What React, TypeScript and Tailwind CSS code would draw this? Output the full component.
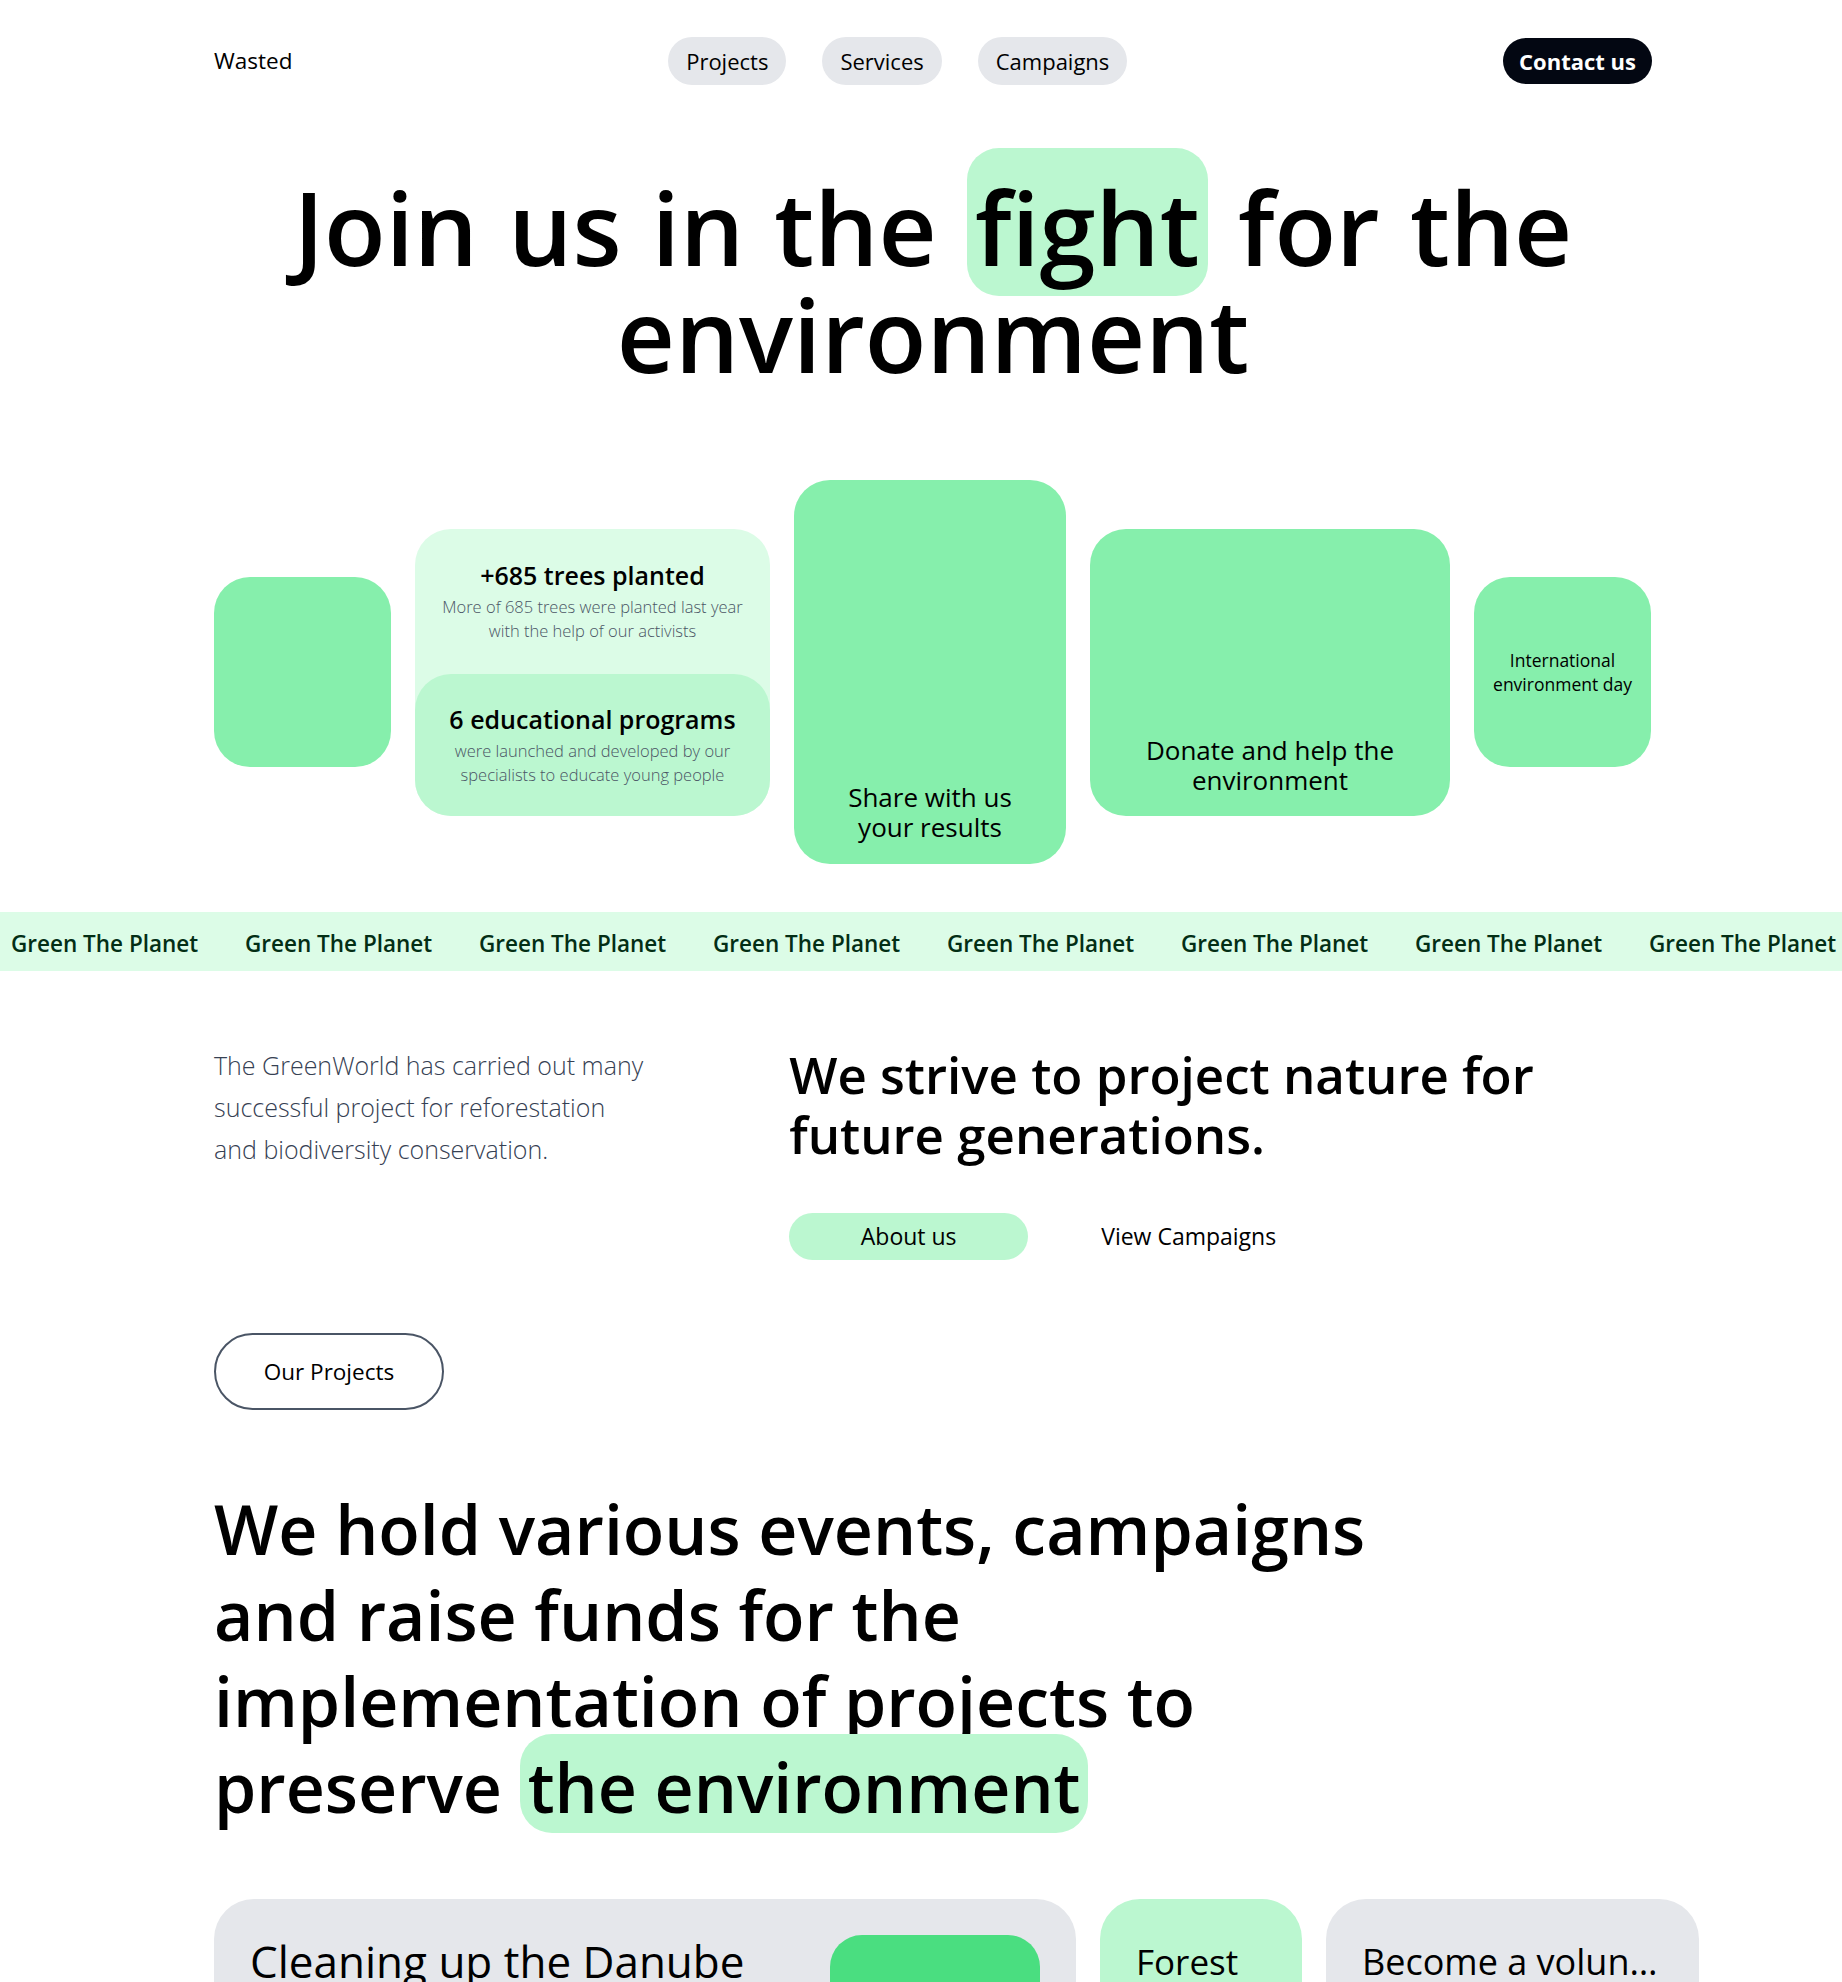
const NAV = ['Projects', 'Services', 'Campaigns']

export default function App() {
  return (
    <div className="min-h-screen overflow-hidden bg-white font-['Open_Sans',sans-serif] text-black">
      <div className="pl-[214px] pr-[190px]">
        <header className="flex items-center justify-between pt-[37px]">
          <a className="text-[22.5px] font-medium">Wasted</a>
          <nav className="flex items-center gap-9">
            {NAV.map((item) => (
              <a key={item} className="rounded-full bg-gray-200 px-[18px] py-2.5 text-[22px] leading-7">
                {item}
              </a>
            ))}
          </nav>
          <a className="rounded-full bg-gray-950 px-4 py-[9px] text-[22px] font-bold leading-7 text-white">
            Contact us
          </a>
        </header>

        <h1 className="mt-[89px] text-center text-[101px] font-semibold leading-[107px] [word-spacing:4px]">
          Join us in the <span className="rounded-[32px] bg-[#bbf7d0] px-2 pt-[10px]">fight</span> for the
          <br />
          environment
        </h1>

        <section className="mt-[92px] flex items-center gap-6">
          <div className="h-[190px] w-[177px] shrink-0 rounded-[36px] bg-[#86efac]" />

          <div className="flex h-[287px] w-[355px] shrink-0 flex-col rounded-[36px] bg-[#dcfce7]">
            <div className="flex flex-1 flex-col items-center justify-center px-3 text-center">
              <h3 className="text-[25px] font-semibold leading-8">+685 trees planted</h3>
              <p className="mt-1 text-[16.5px] font-light leading-6 text-gray-600">
                More of 685 trees were planted last year
                <br />
                with the help of our activists
              </p>
            </div>
            <div className="flex h-[142px] flex-col items-center justify-center rounded-[36px] bg-[#bbf7d0] px-3 text-center">
              <h3 className="text-[25px] font-semibold leading-8">6 educational programs</h3>
              <p className="mt-1 text-[16.5px] font-light leading-6 text-gray-600">
                were launched and developed by our
                <br />
                specialists to educate young people
              </p>
            </div>
          </div>

          <div className="flex h-[384px] w-[272px] shrink-0 items-end justify-center rounded-[36px] bg-[#86efac] px-6 pb-[22px] text-center">
            <p className="text-[26px] font-medium leading-[30px]">
              Share with us
              <br />
              your results
            </p>
          </div>

          <div className="flex h-[287px] w-[360px] shrink-0 items-end justify-center rounded-[36px] bg-[#86efac] px-6 pb-[21px] text-center">
            <p className="text-[26px] font-medium leading-[30px]">
              Donate and help the
              <br />
              environment
            </p>
          </div>

          <div className="flex h-[190px] w-[177px] shrink-0 items-center justify-center rounded-[36px] bg-[#86efac] px-2 text-center">
            <p className="text-[17.5px] font-medium leading-6">
              International
              <br />
              environment day
            </p>
          </div>
        </section>
      </div>

      <div className="mt-12 flex h-[59px] items-center overflow-hidden whitespace-nowrap bg-[#dcfce7] pl-[11px] pt-1">
        {Array.from({ length: 9 }).map((_, i) => (
          <span key={i} className="w-[234px] shrink-0 text-[22.5px] font-semibold text-green-950">
            Green The Planet
          </span>
        ))}
      </div>

      <div className="pl-[214px] pr-[190px]">
        <section className="mt-[73px] grid grid-cols-5">
          <p className="col-span-2 text-[25px] font-light leading-[42px] text-gray-700">
            The GreenWorld has carried out many
            <br />
            successful project for reforestation
            <br />
            and biodiversity conservation.
          </p>
          <div className="col-span-3">
            <h2 className="text-[51px] font-semibold leading-[60px]">
              We strive to project nature for
              <br />
              future generations.
            </h2>
            <div className="mt-[49px] flex items-center gap-[41px]">
              <a className="flex h-[47px] w-[239px] items-center justify-center rounded-full bg-[#bbf7d0] text-[23px]">
                About us
              </a>
              <a className="flex h-[47px] w-[239px] items-center justify-center text-[23px]">
                View Campaigns
              </a>
            </div>
          </div>
        </section>

        <a className="mt-[73px] flex h-[77px] w-[230px] items-center justify-center rounded-full border-2 border-gray-600 text-[22.5px]">
          Our Projects
        </a>

        <h2 className="mt-[76px] text-[68px] font-semibold leading-[86px]">
          We hold various events, campaigns
          <br />
          and raise funds for the
          <br />
          implementation of projects to
          <br />
          preserve <span className="rounded-[32px] bg-[#bbf7d0] px-2 pt-[6px]">the environment</span>
        </h2>

        <section className="mt-[69px] flex gap-6 pb-20">
          <div className="flex h-[320px] w-[862px] shrink-0 items-start justify-between rounded-[40px] bg-gray-200 px-9 pt-9">
            <h3 className="text-[44px] font-medium leading-[1.2]">Cleaning up the Danube</h3>
            <div className="h-[140px] w-[210px] rounded-[32px] bg-[#4ade80]" />
          </div>
          <div className="h-[320px] w-[202px] shrink-0 rounded-[40px] bg-[#bbf7d0] px-9 pt-[42px]">
            <h3 className="text-[35px] font-medium leading-[1.2]">Forest</h3>
          </div>
          <div className="h-[320px] w-[373px] shrink-0 rounded-[40px] bg-gray-200 px-9 pt-[41px]">
            <h3 className="truncate text-[36px] font-medium leading-[1.2]">Become a volunteer</h3>
          </div>
        </section>
      </div>
    </div>
  )
}
